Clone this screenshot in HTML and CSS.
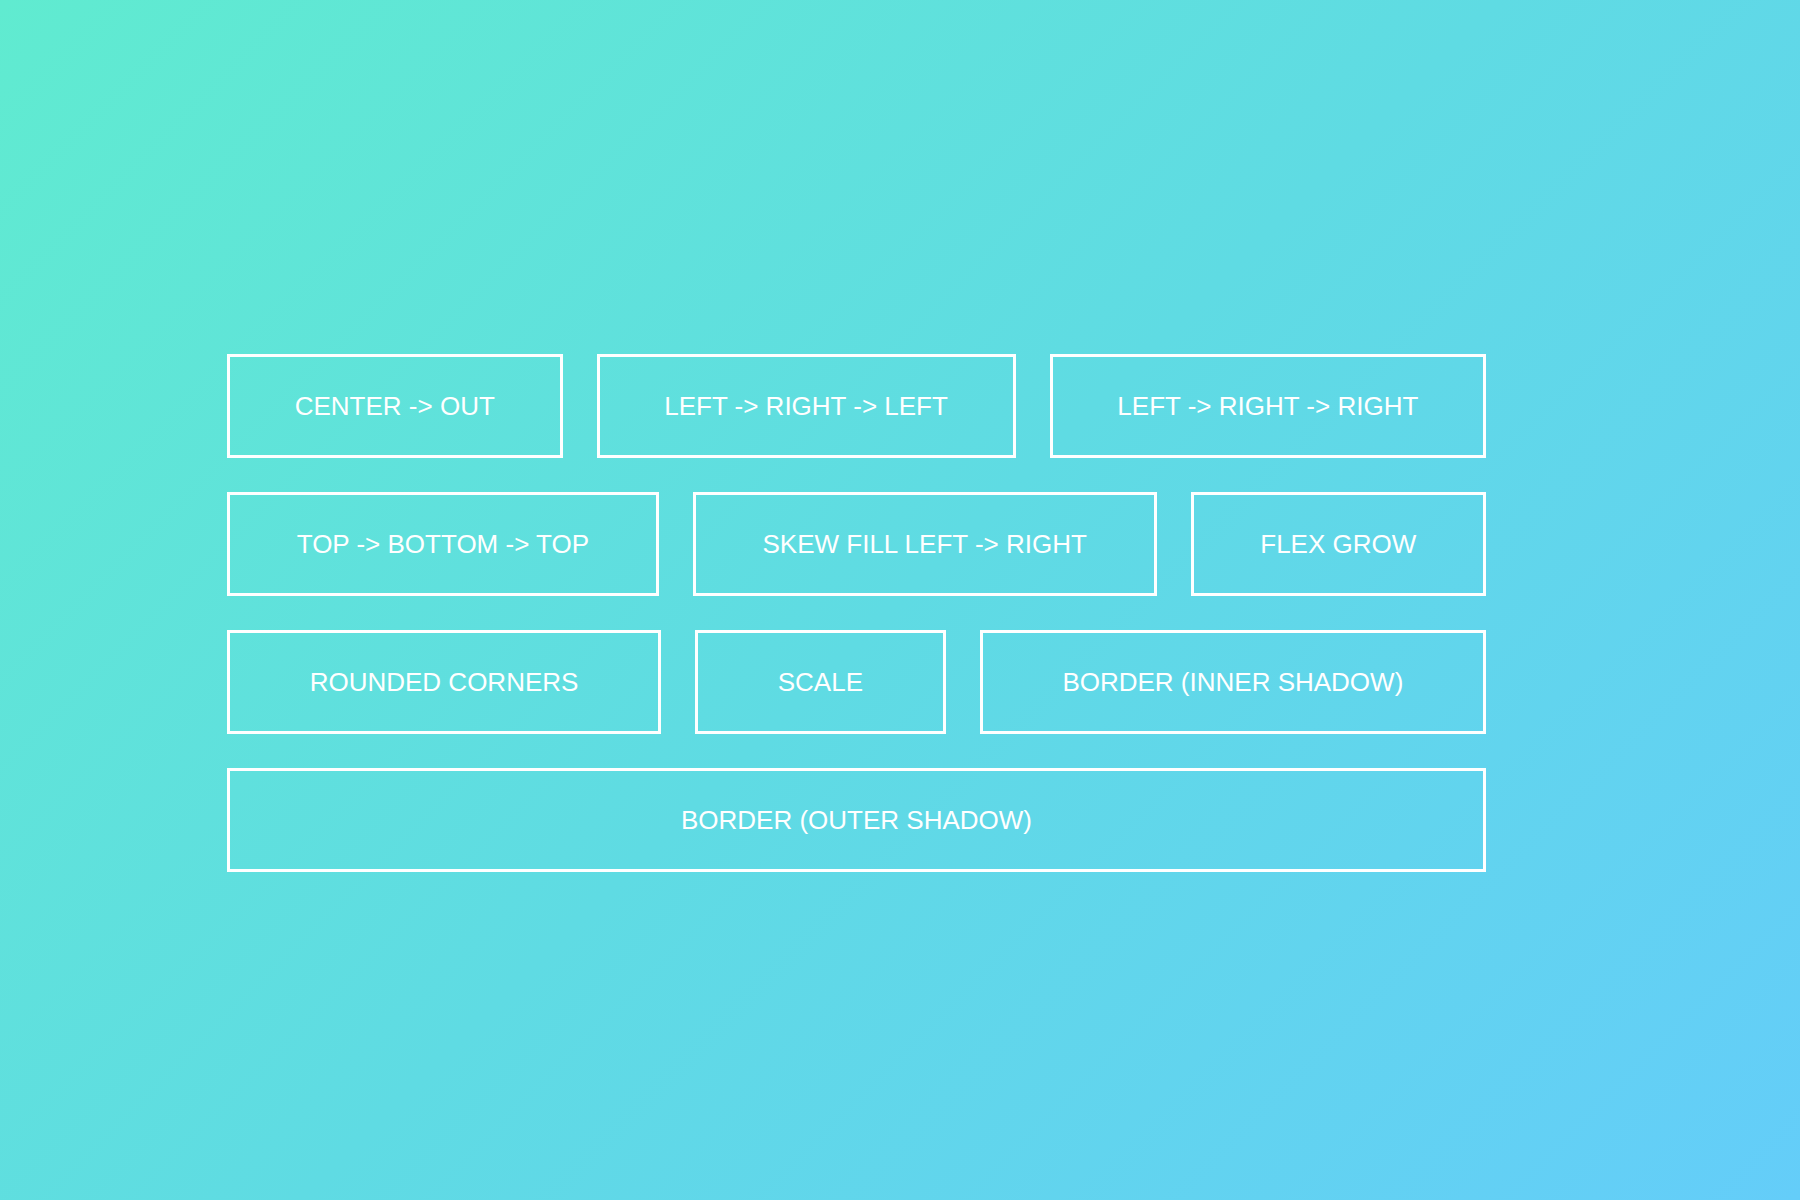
FILE: index.html
```html
<!DOCTYPE html>
<html lang="en">
<head>
<meta charset="utf-8">
<title>Buttons</title>
<link rel="stylesheet" href="styles.css">
</head>
<body>
<div class="wrap">
  <div class="row">
    <a class="btn">CENTER -&gt; OUT</a>
    <a class="btn">LEFT -&gt; RIGHT -&gt; LEFT</a>
    <a class="btn">LEFT -&gt; RIGHT -&gt; RIGHT</a>
  </div>
  <div class="row">
    <a class="btn">TOP -&gt; BOTTOM -&gt; TOP</a>
    <a class="btn">SKEW FILL LEFT -&gt; RIGHT</a>
    <a class="btn">FLEX GROW</a>
  </div>
  <div class="row">
    <a class="btn">ROUNDED CORNERS</a>
    <a class="btn">SCALE</a>
    <a class="btn">BORDER (INNER SHADOW)</a>
  </div>
  <div class="row">
    <a class="btn">BORDER (OUTER SHADOW)</a>
  </div>
</div>
</body>
</html>
```
FILE: styles.css
```css
html, body {
  margin: 0;
  padding: 0;
  height: 100%;
}
body {
  background: linear-gradient(135deg, #60ebd0 0%, #5fdbe3 50%, #64cdf9 100%);
  font-family: "Liberation Sans", Arial, Helvetica, sans-serif;
  color: #fff;
  min-height: 1200px;
}
.wrap {
  width: 1259px;
  margin-left: 227px;
  padding-top: 354px;
  display: flex;
  flex-direction: column;
  gap: 34px;
}
.row {
  display: flex;
  gap: 34px;
}
.btn {
  flex: 1 1 auto;
  box-sizing: border-box;
  height: 104px;
  border: 3px solid #fff;
  display: flex;
  align-items: center;
  justify-content: center;
  padding: 0 60px;
  font-size: 26px;
  color: #fff;
  white-space: nowrap;
  text-decoration: none;
}
```
